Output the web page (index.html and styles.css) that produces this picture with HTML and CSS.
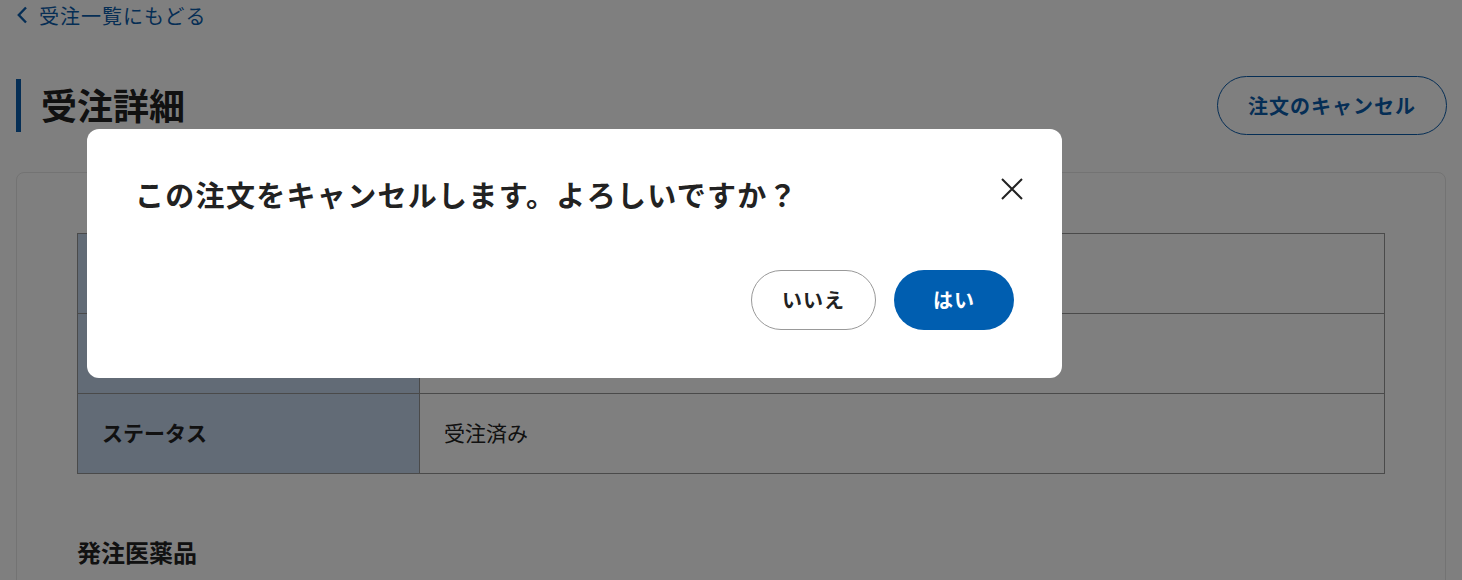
FILE: index.html
```html
<!DOCTYPE html>
<html lang="ja">
<head>
<meta charset="utf-8">
<title>受注詳細</title>
<link rel="stylesheet" href="styles.css">
</head>
<body>
<div class="page">
  <a class="back" href="#">
    <svg class="back-icon" width="12" height="18" viewBox="0 0 12 18"><path d="M10 1.5 L2.8 9 L10 16.5" fill="none" stroke="currentColor" stroke-width="2.4"/></svg>
    <span>受注一覧にもどる</span>
  </a>
  <div class="head-row">
    <h1 class="title">受注詳細</h1>
    <button class="btn-outline">注文のキャンセル</button>
  </div>
  <div class="card">
    <table class="info">
      <tr><th>受注番号</th><td>20240001</td></tr>
      <tr><th>受注日時</th><td>2024/04/01 10:00</td></tr>
      <tr><th>ステータス</th><td>受注済み</td></tr>
    </table>
    <h2 class="section">発注医薬品</h2>
  </div>
</div>

<div class="overlay">
  <div class="modal">
    <div class="modal-head">
      <p class="modal-title">この注文をキャンセルします。よろしいですか？</p>
      <button class="close" aria-label="閉じる">
        <svg width="22" height="22" viewBox="0 0 22 22"><path d="M1 1 L21 21 M21 1 L1 21" stroke="#222" stroke-width="2" fill="none"/></svg>
      </button>
    </div>
    <div class="modal-actions">
      <button class="btn-no">いいえ</button>
      <button class="btn-yes">はい</button>
    </div>
  </div>
</div>
</body>
</html>
```

FILE: styles.css
```css
* { box-sizing: border-box; }
body {
  margin: 0;
  font-family: "Noto Sans CJK JP", "Noto Sans", sans-serif;
  color: #222;
  background: #fff;
}
.page {
  padding: 0 16px;
}
.back {
  display: flex;
  align-items: center;
  gap: 11px;
  height: 30px;
  color: #0b5cab;
  text-decoration: none;
  font-size: 20px;
  letter-spacing: 0.05em;
}
.back-icon { margin-top: 0; }
.head-row {
  display: flex;
  justify-content: space-between;
  align-items: center;
  margin-top: 46px;
  height: 59px;
}
.title {
  margin: 0;
  height: 53px;
  border-left: 5px solid #0b5cab;
  padding-left: 20px;
  font-size: 36px;
  line-height: 51px;
  font-weight: 700;
}
.btn-outline {
  font-family: inherit;
  height: 59px;
  width: 230px;
  margin-right: -1px;
  border: 1px solid #0b5cab;
  border-radius: 30px;
  background: #fff;
  color: #0b5cab;
  font-size: 20px;
  font-weight: 700;
  letter-spacing: 0.05em;
}
.card {
  margin-top: 37px;
  border: 1px solid #e6e6e6;
  border-radius: 8px;
  padding: 60px 60px 40px;
  background: #fff;
}
.info {
  width: 100%;
  border-collapse: collapse;
}
.info th, .info td {
  border: 1px solid #949494;
  height: 80px;
  font-size: 21px;
  text-align: left;
  padding: 0 24px 3px;
}
.info th {
  width: 342px;
  background: #c4d6ec;
  font-weight: 700;
}
.info td { font-weight: 400; }
.section {
  margin: 60px 0 0;
  font-size: 24px;
  font-weight: 700;
}
.overlay {
  position: fixed;
  inset: 0;
  background: rgba(0, 0, 0, 0.5);
}
.modal {
  position: absolute;
  left: 87px;
  top: 129px;
  width: 975px;
  height: 249px;
  background: #fff;
  border-radius: 12px;
  padding: 48px;
  display: flex;
  flex-direction: column;
}
.modal-head {
  display: flex;
  justify-content: space-between;
  align-items: flex-start;
}
.modal-title {
  margin: 0;
  font-size: 29px;
  line-height: 34px;
  font-weight: 700;
  letter-spacing: 0.045em;
}
.close {
  border: 0;
  background: none;
  padding: 0;
  width: 22px;
  height: 22px;
  margin-top: 1px;
  margin-right: -9px;
}
.close svg { display: block; }
.modal-actions {
  margin-top: auto;
  display: flex;
  justify-content: flex-end;
  gap: 18px;
}
.btn-no, .btn-yes {
  font-family: inherit;
  height: 60px;
  border-radius: 30px;
  font-size: 20px;
  font-weight: 700;
  min-width: 120px;
  padding: 0 30px 2px;
  white-space: nowrap;
  letter-spacing: 0.05em;
}
.btn-no {
  background: #fff;
  border: 1px solid #999;
  color: #222;
}
.btn-yes {
  background: #005eb0;
  border: 0;
  color: #fff;
}
```
